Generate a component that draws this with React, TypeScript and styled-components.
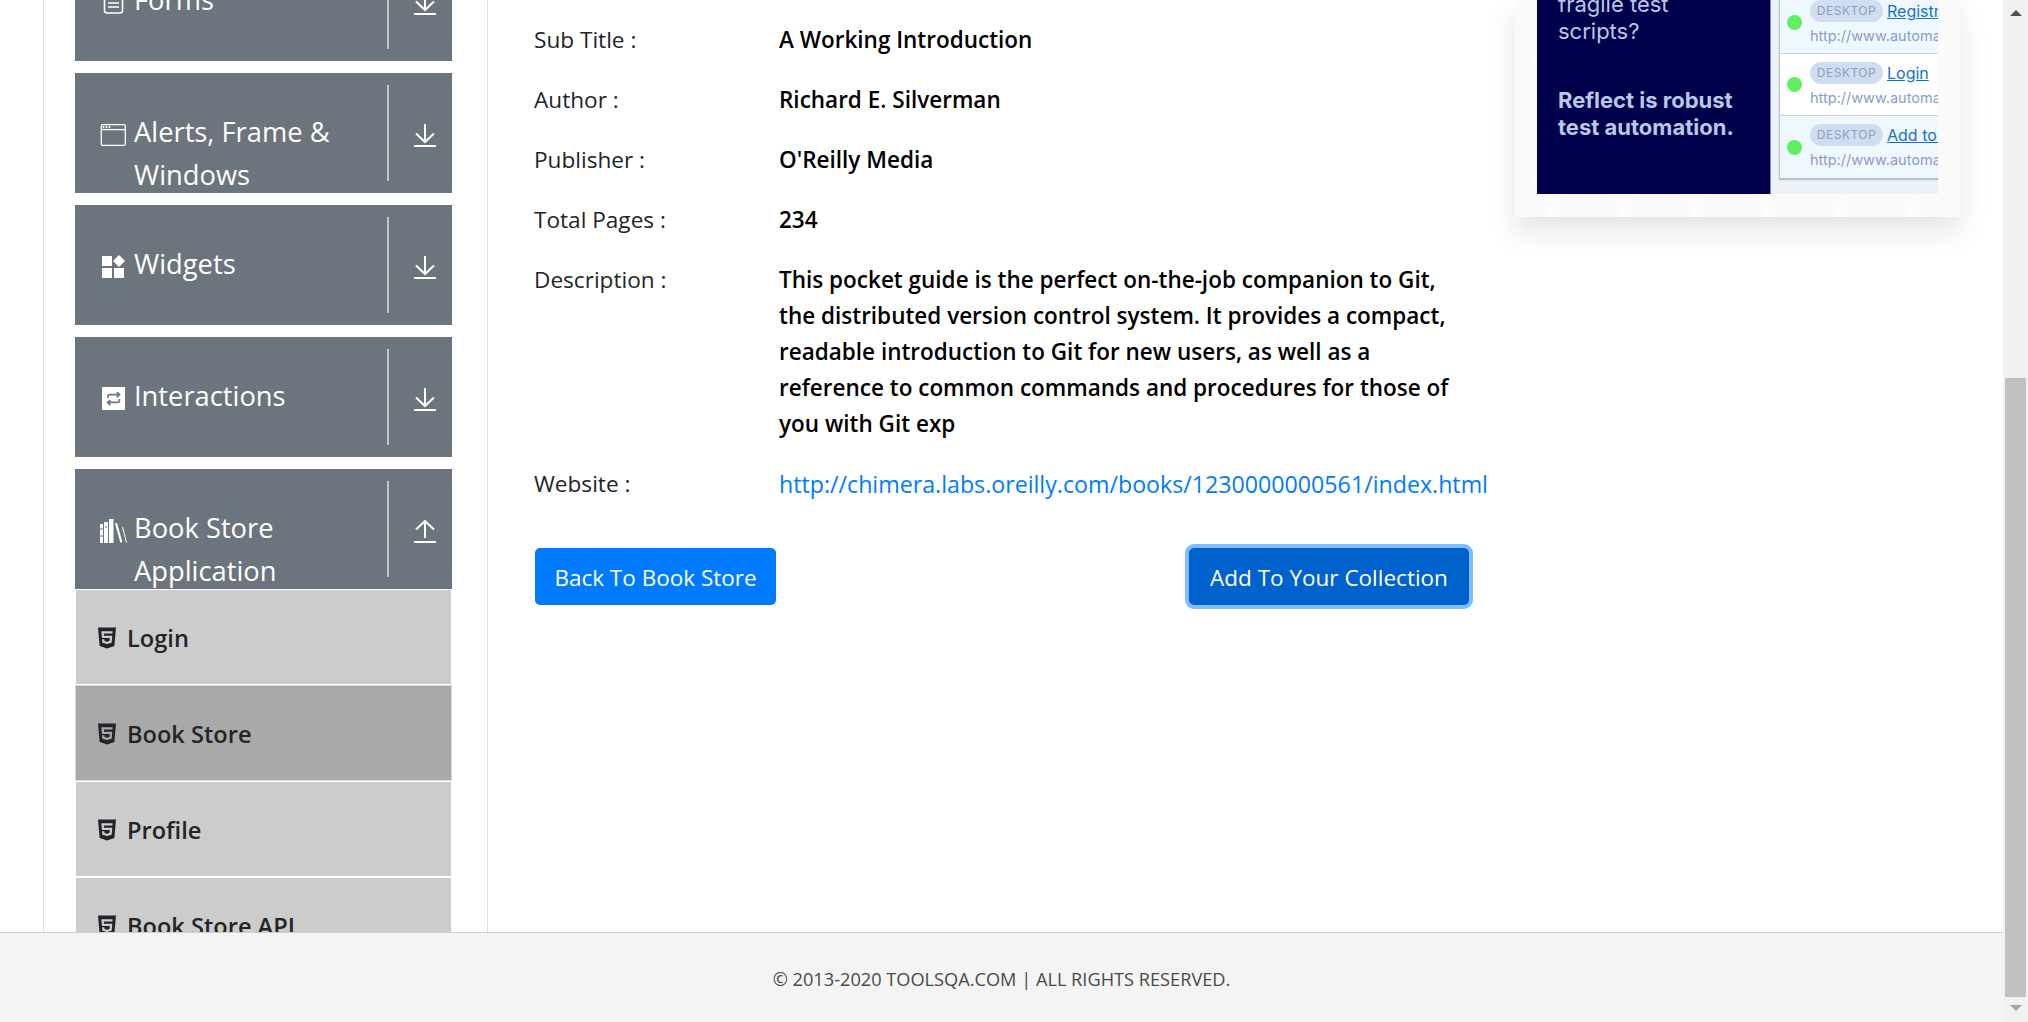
import React, { FC } from "react";
import styled, { createGlobalStyle } from "styled-components";
import { FaHtml5 } from "react-icons/fa";

const GlobalStyle = createGlobalStyle`
  html, body {
    margin: 0;
    padding: 0;
    height: 100%;
    overflow: hidden;
    background: #fff;
    font-family: "Open Sans", "Noto Sans", sans-serif;
  }
  * {
    box-sizing: border-box;
  }
`;

const FormsIcon = () => (
  <svg width="28" height="24" viewBox="0 0 28 24" fill="none" stroke="#fff">
    <rect x="5.5" y="1" width="18" height="21" rx="2.5" strokeWidth="1.6" />
    <path d="M9 8h11M9 12h11M9 16h11" strokeWidth="1.4" />
  </svg>
);

const WindowIcon = () => (
  <svg width="28" height="24" viewBox="0 0 28 24" fill="none">
    <rect x="2.3" y="1.6" width="24" height="20.8" rx="1.5" stroke="#fff" strokeWidth="1.3" />
    <path d="M2.3 6.6h24" stroke="#fff" strokeWidth="1.3" />
    <path d="M4.5 3v2M7.5 3v2M10.5 3v2" stroke="#fff" strokeWidth="1.6" />
  </svg>
);

const WidgetsIcon = () => (
  <svg width="28" height="24" viewBox="0 0 28 24" fill="#fff">
    <rect x="3" y="1" width="10" height="10" />
    <rect x="3" y="13" width="10" height="10" />
    <rect x="15" y="13" width="10" height="10" />
    <path d="M20 0l6 6-6 6-6-6z" />
  </svg>
);

const InteractionsIcon = () => (
  <svg width="28" height="24" viewBox="0 0 28 24" fill="none">
    <rect x="3" y="0" width="23" height="23" fill="#fff" />
    <path
      d="M9 11V9.2C9 8 9.8 7.6 11 7.6h9M17.8 5l2.8 2.6-2.8 2.6M20.4 12v1.8c0 1.2-.8 1.6-2 1.6H9M11.4 13l-2.8 2.6 2.8 2.6"
      stroke="#6c757d"
      strokeWidth="1.7"
    />
  </svg>
);

const BooksIcon = () => (
  <svg width="28" height="24" viewBox="0 0 28 24" fill="#fff">
    <path d="M1 5h3v19H1zM5 3h4v21H5zM10 0h4.500v24H10z" />
    <path d="M1 10h3M1 17h3M6 8h2" stroke="#6c757d" strokeWidth="1" />
    <path d="M16 4.500l2-.8L23.400 23l-2 .8z" />
    <path d="M23 8l.9-.3L28 23.500l-.9.3z" />
  </svg>
);

const ArrowIcon: FC<{ up?: boolean }> = ({ up }) => (
  <svg width="22" height="23" viewBox="0 0 22 23" fill="none" stroke="#fff" strokeWidth="2">
    {up ? (
      <path d="M11 18V1M2 9.500L11 1l9 8.500" />
    ) : (
      <path d="M11 0v18M2 9.500l9 8.500 9-8.500" />
    )}
    <path d="M0 22h22" />
  </svg>
);

const cards = [
  { title: "Forms", icon: <FormsIcon /> },
  { title: "Alerts, Frame & Windows", icon: <WindowIcon /> },
  { title: "Widgets", icon: <WidgetsIcon /> },
  { title: "Interactions", icon: <InteractionsIcon /> },
  { title: "Book Store Application", icon: <BooksIcon />, open: true },
];

const menuItems = ["Login", "Book Store", "Profile", "Book Store API"];

const details = [
  { label: "Sub Title :", value: ["A Working Introduction"] },
  { label: "Author :", value: ["Richard E. Silverman"] },
  { label: "Publisher :", value: ["O'Reilly Media"] },
  { label: "Total Pages :", value: ["234"] },
  {
    label: "Description :",
    value: [
      "This pocket guide is the perfect on-the-job companion to Git,",
      "the distributed version control system. It provides a compact,",
      "readable introduction to Git for new users, as well as a",
      "reference to common commands and procedures for those of",
      "you with Git exp",
    ],
  },
];

const adRows = [
  { link: "Registration", alt: true },
  { link: "Login", alt: false },
  { link: "Add to Cart", alt: true },
];

export default function App() {
  return (
    <>
      <GlobalStyle />
      <Page>
        <Viewport>
          <Content>
            <Sidebar>
              {cards.map((card) => (
                <Card key={card.title}>
                  <IconSlot>{card.icon}</IconSlot>
                  <CardTitle>{card.title}</CardTitle>
                  <Divider />
                  <ArrowSlot>
                    <ArrowIcon up={card.open} />
                  </ArrowSlot>
                </Card>
              ))}
              <Menu>
                {menuItems.map((item) => (
                  <MenuItem key={item} active={item === "Book Store"}>
                    <FaHtml5 size={24} />
                    <span>{item}</span>
                  </MenuItem>
                ))}
              </Menu>
            </Sidebar>
            <Main>
              {details.map((row) => (
                <DetailRow key={row.label}>
                  <Label>{row.label}</Label>
                  <Value>
                    {row.value.map((line) => (
                      <ValueLine key={line}>{line}</ValueLine>
                    ))}
                  </Value>
                </DetailRow>
              ))}
              <DetailRow>
                <Label>Website :</Label>
                <Value>
                  <WebLink href="#">http://chimera.labs.oreilly.com/books/1230000000561/index.html</WebLink>
                </Value>
              </DetailRow>
              <ButtonRow>
                <Button wide={241}>Back To Book Store</Button>
                <Button wide={280} focused>
                  Add To Your Collection
                </Button>
              </ButtonRow>
            </Main>
            <AdCard>
              <AdImage>
                <AdPitch>
                  <AdText>
                    fragile test
                    <br />
                    scripts?
                  </AdText>
                  <AdText bold>
                    Reflect is robust
                    <br />
                    test automation.
                  </AdText>
                </AdPitch>
                <AdPanel>
                  <AdList>
                    {adRows.map((row) => (
                      <AdRow key={row.link} alt={row.alt}>
                        <AdDot />
                        <AdRowBody>
                          <AdRowTop>
                            <AdPill>DESKTOP</AdPill>
                            <AdLink>{row.link}</AdLink>
                          </AdRowTop>
                          <AdUrl>http://www.automationpractice.com</AdUrl>
                        </AdRowBody>
                      </AdRow>
                    ))}
                  </AdList>
                </AdPanel>
              </AdImage>
            </AdCard>
          </Content>
          <Footer>© 2013-2020 TOOLSQA.COM | ALL RIGHTS RESERVED.</Footer>
        </Viewport>
        <Scrollbar>
          <ScrollArrow up />
          <ScrollThumb />
          <ScrollArrow />
        </Scrollbar>
      </Page>
    </>
  );
}

const Page = styled.div`
  display: flex;
  width: 2028px;
  height: 1022px;
  overflow: hidden;
`;

const Viewport = styled.div`
  flex: 1;
  min-width: 0;
  display: flex;
  flex-direction: column;
`;

const Content = styled.div`
  flex: 1;
  min-height: 0;
  display: flex;
  align-items: stretch;
  overflow: hidden;
  padding-left: 43px;
`;

const Sidebar = styled.aside`
  flex: 0 0 445px;
  margin-top: -59px;
  padding-left: 31px;
  border-left: 1px solid #dee2e6;
  border-right: 1px solid #dee2e6;
`;

const Card = styled.div`
  width: 377px;
  height: 120px;
  margin-bottom: 12px;
  padding-top: 12px;
  background: #6c757d;
  color: #fff;
  display: flex;
  align-items: flex-start;
  overflow: hidden;

  &:nth-of-type(5) {
    margin-bottom: 0;
  }
`;

const IconSlot = styled.div`
  flex: 0 0 59px;
  padding: 38px 0 0 24px;
  line-height: 0;
`;

const CardTitle = styled.div`
  flex: 0 0 253px;
  padding-top: 25px;
  font-size: 27.300px;
  line-height: 43px;
`;

const Divider = styled.div`
  flex: 0 0 2px;
  height: 96px;
  background: #c2c5c8;
`;

const ArrowSlot = styled.div`
  margin: 39px 0 0 25px;
  line-height: 0;
`;

const Menu = styled.div`
  width: 377px;
`;

const MenuItem = styled.div<{ active?: boolean }>`
  height: 96px;
  padding: 30px 0 0 19px;
  display: flex;
  align-items: flex-start;
  gap: 8px;
  border: 1px solid ${({ active }) => (active ? "#d5d8dc" : "#fff")};
  background: ${({ active }) => (active ? "#a9a9a9" : "#cccccc")};
  color: #212529;
  font-size: 23.600px;
  font-weight: 600;
  line-height: 36px;

  svg {
    margin-top: 6px;
  }
`;

const Main = styled.main`
  flex: 0 0 1027px;
  padding: 22px 0 0 46px;
`;

const DetailRow = styled.div`
  display: flex;
  margin-bottom: 24px;
  font-size: 22.500px;
  line-height: 36px;
`;

const Label = styled.div`
  flex: 0 0 245px;
  color: #212529;
  font-size: 22.600px;
`;

const Value = styled.div`
  color: #000;
  font-weight: 600;
`;

const ValueLine = styled.div`
  white-space: nowrap;
`;

const WebLink = styled.a`
  display: block;
  color: #007bff;
  font-size: 23.200px;
  font-weight: 500;
  text-decoration: none;
  white-space: nowrap;
`;

const ButtonRow = styled.div`
  display: flex;
  justify-content: space-between;
  width: 934px;
  margin: 46px 0 0 1px;
`;

const Button = styled.button<{ wide: number; focused?: boolean }>`
  width: ${({ wide }) => wide}px;
  height: 57px;
  padding: 1px 0 0;
  border: none;
  border-radius: 5px;
  color: #fff;
  font-family: inherit;
  font-size: 22.500px;
  background: ${({ focused }) => (focused ? "#0062cc" : "#007bff")};
  box-shadow: ${({ focused }) => (focused ? "0 0 0 4px #80bdff" : "none")};
`;

const AdCard = styled.div`
  flex: 0 0 445px;
  width: 445px;
  align-self: flex-start;
  height: 217px;
  padding: 0 22px 23px;
  background:
    linear-gradient(60deg, transparent 49%, #ffffff 50%, transparent 51%) 0 0 / 72px 60px,
    linear-gradient(120deg, transparent 49%, #ffffff 50%, transparent 51%) 0 0 / 72px 60px,
    #fafafa;
  box-shadow: 0 14px 28px rgba(0, 0, 0, 0.11);
`;

const AdImage = styled.div`
  display: flex;
  height: 100%;
  overflow: hidden;
  font-family: Inter, "Open Sans", sans-serif;
`;

const AdPitch = styled.div`
  flex: 0 0 233px;
  display: flex;
  flex-direction: column;
  justify-content: flex-end;
  gap: 42px;
  padding: 0 0 53px 21px;
  background: #00004b;
`;

const AdText = styled.div<{ bold?: boolean }>`
  color: #b9c8e6;
  font-size: 22px;
  line-height: 27px;
  font-weight: ${({ bold }) => (bold ? 700 : 400)};
`;

const AdPanel = styled.div`
  flex: 1;
  min-width: 0;
  display: flex;
  flex-direction: column;
  justify-content: flex-end;
  padding: 0 0 16px 9px;
  background: #ecf2f7;
  border-left: 1px solid #7f8fb5;
`;

const AdList = styled.div`
  width: 260px;
  box-shadow: -1px 2px 1px rgba(90, 105, 130, 0.35);
`;

const AdRow = styled.div<{ alt: boolean }>`
  height: 62px;
  display: flex;
  align-items: center;
  gap: 8px;
  padding-left: 7px;
  border-bottom: 1px solid #c9d2de;
  background: ${({ alt }) => (alt ? "#f0f8ff" : "#fff")};

  &:last-child {
    border-bottom: none;
  }
`;

const AdDot = styled.div`
  flex: 0 0 15px;
  height: 15px;
  border-radius: 50%;
  background: #5ef05e;
`;

const AdRowBody = styled.div`
  display: flex;
  flex-direction: column;
  gap: 4px;
  white-space: nowrap;
`;

const AdRowTop = styled.div`
  display: flex;
  align-items: center;
  gap: 4px;
`;

const AdPill = styled.span`
  width: 73px;
  height: 22px;
  border-radius: 11px;
  background: #d0dcf0;
  color: #8f9fbd;
  font-size: 12px;
  line-height: 22px;
  letter-spacing: 0.5px;
  text-align: center;
`;

const AdLink = styled.span`
  color: #1272cc;
  font-size: 16px;
  text-decoration: underline;
`;

const AdUrl = styled.span`
  color: #8a9dc8;
  font-size: 14.500px;
  line-height: 20px;
`;

const Footer = styled.footer`
  flex: 0 0 90px;
  display: flex;
  align-items: center;
  justify-content: center;
  padding-top: 3px;
  border-top: 1px solid #d0d0d0;
  background: #f4f4f4;
  color: #4a4a4a;
  font-size: 18.200px;
`;

const Scrollbar = styled.div`
  flex: 0 0 25px;
  display: flex;
  flex-direction: column;
  align-items: center;
  padding-top: 10px;
  background: #f1f1f1;
`;

const ScrollArrow = styled.div<{ up?: boolean }>`
  width: 0;
  height: 0;
  border-left: 6px solid transparent;
  border-right: 6px solid transparent;
  ${({ up }) =>
    up
      ? "border-bottom: 6px solid #505050;"
      : "border-top: 6px solid #a3a3a3; margin-top: 8px;"}
`;

const ScrollThumb = styled.div`
  flex: 0 0 619px;
  width: 21px;
  margin-top: 362px;
  background: #c1c1c1;
`;
